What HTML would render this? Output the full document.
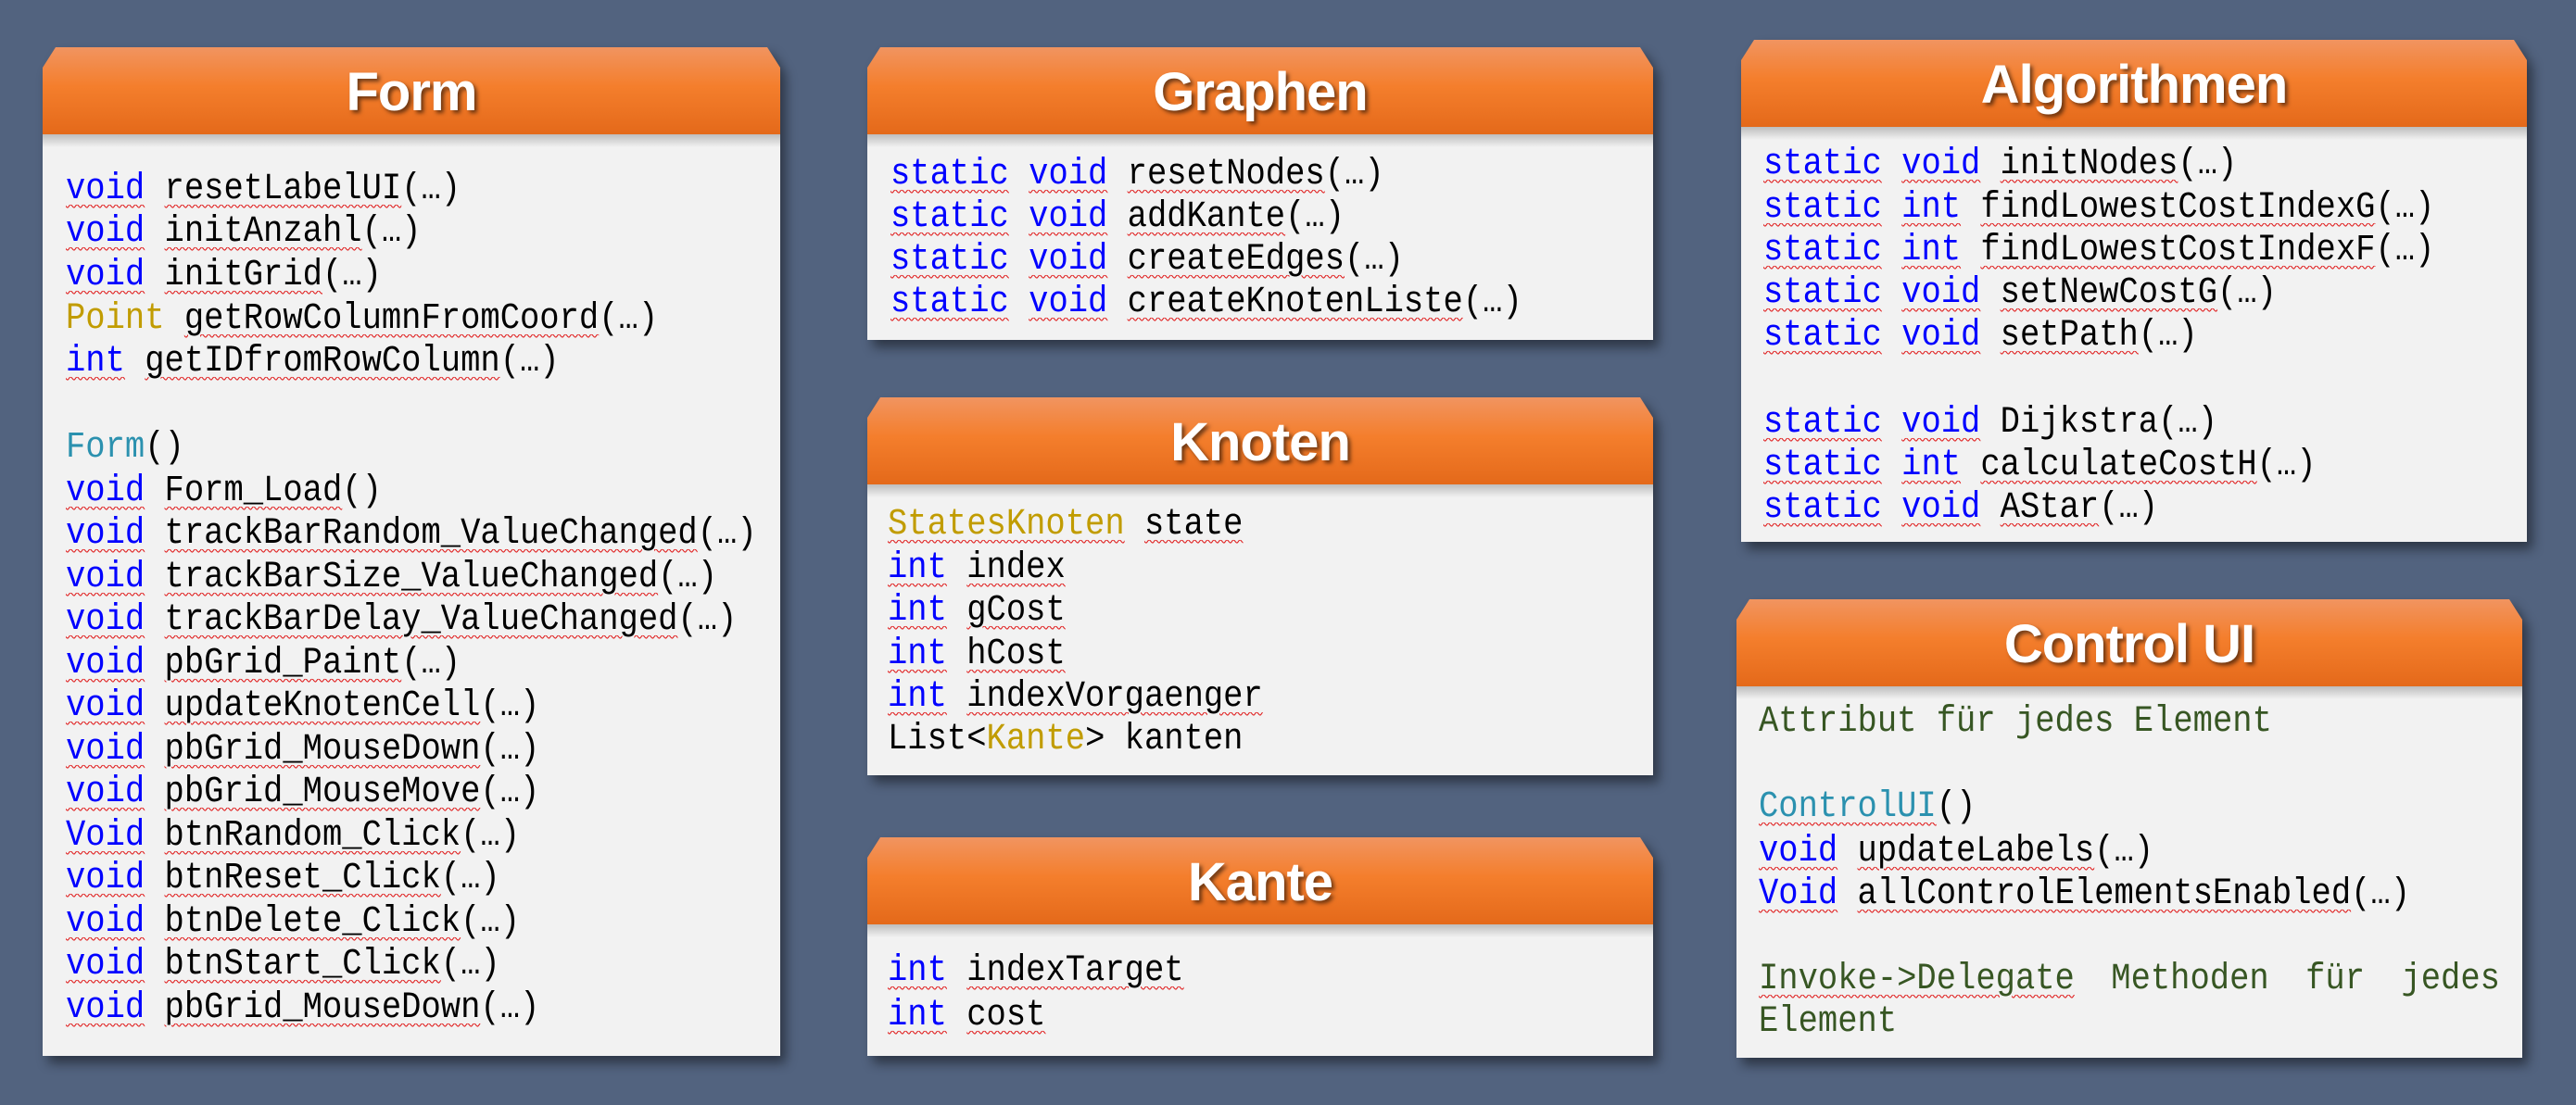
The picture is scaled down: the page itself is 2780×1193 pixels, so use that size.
<!DOCTYPE html>
<html><head><meta charset="utf-8"><style>
*{margin:0;padding:0;box-sizing:border-box}
body{width:2780px;height:1193px;background:#52637f;position:relative;overflow:hidden;font-family:"Liberation Mono",monospace}
.box{position:absolute;filter:drop-shadow(6px 8px 6px rgba(0,0,0,.45))}
.bd{position:absolute;left:0;right:0;top:90px;bottom:0;background:#f2f2f2}
.hd{position:absolute;left:0;right:0;top:0;background:linear-gradient(#f19460,#f47e2c 45%,#e4691a);clip-path:polygon(14px 0,calc(100% - 14px) 0,100% 22px,100% 100%,0 100%,0 22px);color:#fff;font-family:"Liberation Sans",sans-serif;font-weight:bold;font-size:58px;text-align:center;letter-spacing:-1px;text-shadow:3px 3px 4px rgba(0,0,0,.55)}
.hs{position:absolute;left:0;right:0;height:14px;background:linear-gradient(rgba(0,0,0,.22),rgba(0,0,0,0))}
.l{position:absolute;white-space:pre;font-size:35.5px;height:46px;line-height:46px;color:#000;transform:scaleY(1.13);transform-origin:left center}
.k{color:#0000ff}.t{color:#c19c00}.c{color:#2b91af}.g{color:#375623}
.u{text-decoration:underline wavy #e02020;text-decoration-thickness:1px;text-underline-offset:5px}
</style></head><body>

<!-- Form -->
<div class="box" style="left:46px;top:51px;width:796px;height:1089px"><div class="bd"></div>
<div class="hd" style="height:94px;line-height:98px">Form</div><div class="hs" style="top:94px"></div>
</div>
<div class="l" style="left:71px;top:181px"><span class="k u">void</span> <span class="u">resetLabelUI</span>(…)</div>
<div class="l" style="left:71px;top:227px"><span class="k u">void</span> <span class="u">initAnzahl</span>(…)</div>
<div class="l" style="left:71px;top:274px"><span class="k u">void</span> <span class="u">initGrid</span>(…)</div>
<div class="l" style="left:71px;top:321px"><span class="t">Point</span> <span class="u">getRowColumnFromCoord</span>(…)</div>
<div class="l" style="left:71px;top:367px"><span class="k u">int</span> <span class="u">getIDfromRowColumn</span>(…)</div>
<div class="l" style="left:71px;top:460px"><span class="c">Form</span>()</div>
<div class="l" style="left:71px;top:507px"><span class="k u">void</span> <span class="u">Form_Load</span>()</div>
<div class="l" style="left:71px;top:553px"><span class="k u">void</span> <span class="u">trackBarRandom_ValueChanged</span>(…)</div>
<div class="l" style="left:71px;top:600px"><span class="k u">void</span> <span class="u">trackBarSize_ValueChanged</span>(…)</div>
<div class="l" style="left:71px;top:646px"><span class="k u">void</span> <span class="u">trackBarDelay_ValueChanged</span>(…)</div>
<div class="l" style="left:71px;top:693px"><span class="k u">void</span> <span class="u">pbGrid_Paint</span>(…)</div>
<div class="l" style="left:71px;top:739px"><span class="k u">void</span> <span class="u">updateKnotenCell</span>(…)</div>
<div class="l" style="left:71px;top:786px"><span class="k u">void</span> <span class="u">pbGrid_MouseDown</span>(…)</div>
<div class="l" style="left:71px;top:832px"><span class="k u">void</span> <span class="u">pbGrid_MouseMove</span>(…)</div>
<div class="l" style="left:71px;top:879px"><span class="k u">Void</span> <span class="u">btnRandom_Click</span>(…)</div>
<div class="l" style="left:71px;top:925px"><span class="k u">void</span> <span class="u">btnReset_Click</span>(…)</div>
<div class="l" style="left:71px;top:972px"><span class="k u">void</span> <span class="u">btnDelete_Click</span>(…)</div>
<div class="l" style="left:71px;top:1018px"><span class="k u">void</span> <span class="u">btnStart_Click</span>(…)</div>
<div class="l" style="left:71px;top:1065px"><span class="k u">void</span> <span class="u">pbGrid_MouseDown</span>(…)</div>

<!-- Graphen -->
<div class="box" style="left:936px;top:51px;width:848px;height:316px"><div class="bd"></div>
<div class="hd" style="height:94px;line-height:98px">Graphen</div><div class="hs" style="top:94px"></div>
</div>
<div class="l" style="left:961px;top:165px"><span class="k u">static</span> <span class="k u">void</span> <span class="u">resetNodes</span>(…)</div>
<div class="l" style="left:961px;top:211px"><span class="k u">static</span> <span class="k u">void</span> <span class="u">addKante</span>(…)</div>
<div class="l" style="left:961px;top:257px"><span class="k u">static</span> <span class="k u">void</span> <span class="u">createEdges</span>(…)</div>
<div class="l" style="left:961px;top:303px"><span class="k u">static</span> <span class="k u">void</span> <span class="u">createKnotenListe</span>(…)</div>

<!-- Knoten -->
<div class="box" style="left:936px;top:429px;width:848px;height:408px"><div class="bd"></div>
<div class="hd" style="height:94px;line-height:98px">Knoten</div><div class="hs" style="top:94px"></div>
</div>
<div class="l" style="left:958px;top:543px"><span class="t u">StatesKnoten</span> <span class="u">state</span></div>
<div class="l" style="left:958px;top:590px"><span class="k u">int</span> <span class="u">index</span></div>
<div class="l" style="left:958px;top:636px"><span class="k u">int</span> <span class="u">gCost</span></div>
<div class="l" style="left:958px;top:683px"><span class="k u">int</span> <span class="u">hCost</span></div>
<div class="l" style="left:958px;top:729px"><span class="k u">int</span> <span class="u">indexVorgaenger</span></div>
<div class="l" style="left:958px;top:775px">List&lt;<span class="t">Kante</span>&gt; kanten</div>

<!-- Kante -->
<div class="box" style="left:936px;top:904px;width:848px;height:236px"><div class="bd"></div>
<div class="hd" style="height:94px;line-height:98px">Kante</div><div class="hs" style="top:94px"></div>
</div>
<div class="l" style="left:958px;top:1025px"><span class="k u">int</span> <span class="u">indexTarget</span></div>
<div class="l" style="left:958px;top:1073px"><span class="k u">int</span> <span class="u">cost</span></div>

<!-- Algorithmen -->
<div class="box" style="left:1879px;top:43px;width:848px;height:542px"><div class="bd"></div>
<div class="hd" style="height:94px;line-height:98px">Algorithmen</div><div class="hs" style="top:94px"></div>
</div>
<div class="l" style="left:1903px;top:154px"><span class="k u">static</span> <span class="k u">void</span> <span class="u">initNodes</span>(…)</div>
<div class="l" style="left:1903px;top:201px"><span class="k u">static</span> <span class="k u">int</span> <span class="u">findLowestCostIndexG</span>(…)</div>
<div class="l" style="left:1903px;top:247px"><span class="k u">static</span> <span class="k u">int</span> <span class="u">findLowestCostIndexF</span>(…)</div>
<div class="l" style="left:1903px;top:293px"><span class="k u">static</span> <span class="k u">void</span> <span class="u">setNewCostG</span>(…)</div>
<div class="l" style="left:1903px;top:339px"><span class="k u">static</span> <span class="k u">void</span> <span class="u">setPath</span>(…)</div>
<div class="l" style="left:1903px;top:433px"><span class="k u">static</span> <span class="k u">void</span> Dijkstra(…)</div>
<div class="l" style="left:1903px;top:479px"><span class="k u">static</span> <span class="k u">int</span> <span class="u">calculateCostH</span>(…)</div>
<div class="l" style="left:1903px;top:525px"><span class="k u">static</span> <span class="k u">void</span> <span class="u">AStar</span>(…)</div>

<!-- Control UI -->
<div class="box" style="left:1874px;top:647px;width:848px;height:495px"><div class="bd"></div>
<div class="hd" style="height:94px;line-height:98px">Control UI</div><div class="hs" style="top:94px"></div>
</div>
<div class="l g" style="left:1898px;top:756px">Attribut für jedes Element</div>
<div class="l" style="left:1898px;top:848px"><span class="c u">ControlUI</span>()</div>
<div class="l" style="left:1898px;top:896px"><span class="k u">void</span> <span class="u">updateLabels</span>(…)</div>
<div class="l" style="left:1898px;top:942px"><span class="k u">Void</span> <span class="u">allControlElementsEnabled</span>(…)</div>
<div class="l g" style="left:1898px;top:1034px;width:800px;display:flex;justify-content:space-between"><span class="u">Invoke-&gt;Delegate</span><span>Methoden</span><span>für</span><span>jedes</span></div>
<div class="l g" style="left:1898px;top:1080px">Element</div>

</body></html>
